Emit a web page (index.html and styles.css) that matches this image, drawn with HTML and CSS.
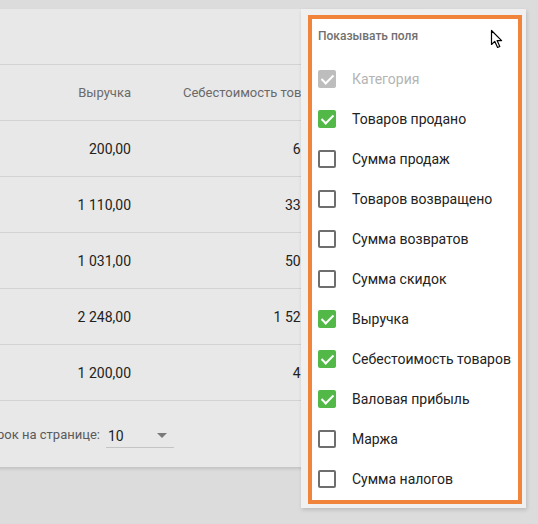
FILE: index.html
```html
<!DOCTYPE html>
<html>
<head>
<meta charset="utf-8">
<title>Отчёт по категориям</title>
<link rel="stylesheet" href="styles.css">
</head>
<body>
<div class="stage">
	<div class="card">
		<div class="toolbar"></div>
		<div class="row head">
			<div class="c1">Выручка</div>
			<div class="c2">Себестоимость товаров</div>
		</div>
		<div class="row">
			<div class="c1">200,00</div>
			<div class="c2">60,00</div>
		</div>
		<div class="row">
			<div class="c1">1 110,00</div>
			<div class="c2">330,00</div>
		</div>
		<div class="row">
			<div class="c1">1 031,00</div>
			<div class="c2">502,00</div>
		</div>
		<div class="row">
			<div class="c1">2 248,00</div>
			<div class="c2">1 520,00</div>
		</div>
		<div class="row">
			<div class="c1">1 200,00</div>
			<div class="c2">48,00</div>
		</div>
		<div class="foot">
			<span class="foot_label">Строк на странице:</span>
			<div class="select">
				<span>10</span>
				<i class="arrow"></i>
			</div>
		</div>
	</div>

	<!-- меню выбора полей -->
	<div class="menu">
		<div class="menu_box">
			<div class="menu_title">Показывать поля</div>
			<ul class="fields">
				<li class="disabled"><span class="cb on"></span>Категория</li>
				<li><span class="cb on"></span>Товаров продано</li>
				<li><span class="cb"></span>Сумма продаж</li>
				<li><span class="cb"></span>Товаров возвращено</li>
				<li><span class="cb"></span>Сумма возвратов</li>
				<li><span class="cb"></span>Сумма скидок</li>
				<li><span class="cb on"></span>Выручка</li>
				<li><span class="cb on"></span>Себестоимость товаров</li>
				<li><span class="cb on"></span>Валовая прибыль</li>
				<li><span class="cb"></span>Маржа</li>
				<li><span class="cb"></span>Сумма налогов</li>
			</ul>
		</div>
	</div>

	<svg class="cursor" width="14" height="20" viewBox="0 0 14 20">
		<path d="M1.5 1.5 L1.5 15.5 L4.8 12.4 L7.6 18.5 L9.8 17.5 L7.1 11.6 L11.6 11.6 Z" fill="#fff" stroke="#000" stroke-width="1.2" stroke-linejoin="round"/>
	</svg>
</div>
</body>
</html>
```

FILE: styles.css
```css
*{margin:0;padding:0;box-sizing:border-box;}
li{list-style:none;}
body{background:#dcdcdc;font-family:Roboto,"Noto Sans",sans-serif;overflow:hidden;width:538px;height:524px;}
.stage{position:relative;padding-top:9px;height:524px;}

.card{width:620px;margin-left:-200px;background:#e8e8e8;box-shadow:0 2px 3px rgba(0,0,0,.12);}
.toolbar{height:56px;border-bottom:1px solid #d2d2d2;}
.row{display:flex;height:56px;align-items:center;border-bottom:1px solid #d2d2d2;font-size:14px;color:#222;}
.row .c1{width:331px;text-align:right;}
.row .c2{width:196px;text-align:right;white-space:nowrap;}
.row.head{font-size:13px;color:#6a6a6a;}
.row.head .c2{text-align:left;padding-left:52px;}
.foot{height:66px;display:flex;align-items:center;font-size:13px;color:#5a5a5a;}
.foot_label{width:300px;text-align:right;margin-right:6px;flex:none;}
.select{width:68px;height:24px;border-bottom:1px solid #c4c4c4;display:flex;align-items:center;justify-content:space-between;padding:0 7px 0 2px;margin-top:4px;color:#222;font-size:14px;}
.arrow{width:0;height:0;border-left:5px solid transparent;border-right:5px solid transparent;border-top:5px solid #7a7a7a;}

.menu{position:absolute;left:301px;top:9px;width:225px;height:499px;background:#f0f0f0;padding:6px 4px 4px 7px;box-shadow:1px 2px 4px rgba(0,0,0,.15);}
.menu_box{border:4px solid #f0843a;background:#fff;height:100%;padding:0 0 0 6px;}
.menu_title{height:40px;padding-top:10px;font-size:12px;line-height:14px;font-weight:500;color:#707070;}
.fields li{height:40px;display:flex;align-items:center;font-size:14px;color:#222;}
.fields li.disabled{color:#b4b4b4;}
.cb{width:18px;height:18px;border:2px solid #6e6e6e;border-radius:2px;margin-right:16px;position:relative;flex:none;}
.cb.on{background:#52b848;border-color:#52b848;}
.cb.on:after{content:"";position:absolute;left:4px;top:0px;width:5px;height:10px;border:solid #fff;border-width:0 2px 2px 0;transform:rotate(45deg);}
.disabled .cb.on{background:#bdbdbd;border-color:#bdbdbd;}
.cursor{position:absolute;left:490px;top:29px;}
```
